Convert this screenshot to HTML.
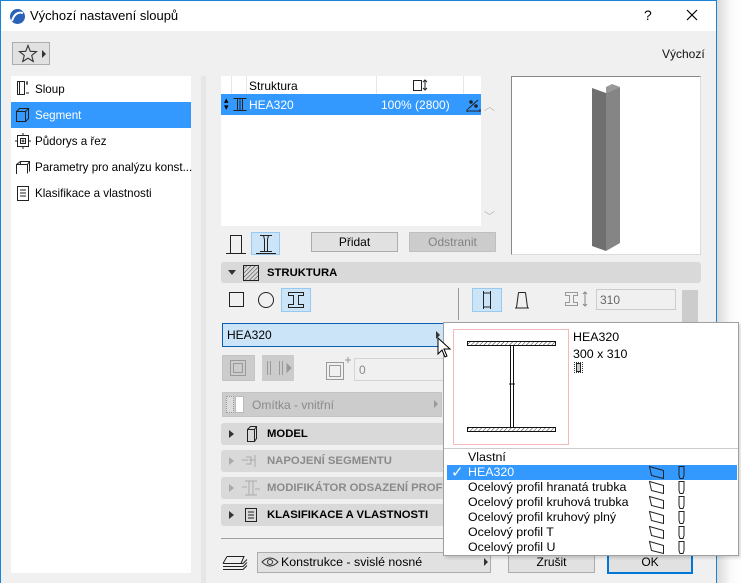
<!DOCTYPE html>
<html><head><meta charset="utf-8"><style>
*{box-sizing:border-box;margin:0;padding:0}
body{width:741px;height:583px;background:#fff;font-family:"Liberation Sans",sans-serif;font-size:12px;color:#000;position:relative;overflow:hidden}
.a{position:absolute}
.btn{position:absolute;background:#e1e1e1;border:1px solid #adadad;text-align:center;line-height:18px}
.sec{position:absolute;left:221px;width:480px;height:22px;background:#d9d9d9;border-radius:3px;font-weight:bold;line-height:22px;font-size:11.3px}
.tri{position:absolute;left:8px;top:7px;width:0;height:0;border-left:5px solid #333;border-top:4px solid transparent;border-bottom:4px solid transparent}
.dis{color:#8a8a8a}
.dis .tri{border-left-color:#aaa}
.it{position:absolute;left:468px;height:15px;line-height:15px;font-size:12.4px}
.nav{position:absolute;left:35px;font-size:11.6px}
</style></head><body>
<div class="a" style="left:716px;top:0;width:25px;height:583px;background:linear-gradient(90deg,#d8d8d8,#fafafa 60%,#fff)"></div>
<div class="a" style="left:0;top:0;width:717px;height:583px;background:#f0f0f0;border-left:1px solid #1883d7;border-right:1px solid #1883d7;border-top:1px solid #1883d7"></div>
<div class="a" style="left:1px;top:1px;width:715px;height:30px;background:#fff"></div>
<svg class="a" style="left:9px;top:8px" width="17" height="17"><circle cx="8.5" cy="8.5" r="7.5" fill="#2a62b8"/><path d="M3 13 Q6 3 14 5" stroke="#fff" stroke-width="2" fill="none"/></svg>
<div class="a" style="left:30px;top:8px;font-size:13px">Výchozí nastavení sloupů</div>
<div class="a" style="left:644px;top:7px;font-size:14px">?</div>
<svg class="a" style="left:686px;top:9px" width="12" height="12"><path d="M1 1L11 11M11 1L1 11" stroke="#000" stroke-width="1.2"/></svg>
<div class="a" style="left:12px;top:42px;width:38px;height:23px;background:#e1e1e1;border:1px solid #adadad"></div>
<svg class="a" style="left:18px;top:44px" width="20" height="19"><path d="M10 1.5L12.3 7.3 18.5 7.6 13.7 11.5 15.3 17.5 10 14.1 4.7 17.5 6.3 11.5 1.5 7.6 7.7 7.3Z" fill="none" stroke="#333" stroke-width="1.1"/></svg>
<div class="a" style="left:42px;top:50px;border-left:4px solid #333;border-top:4px solid transparent;border-bottom:4px solid transparent"></div>
<div class="a" style="left:662px;top:47px;color:#111">Výchozí</div>
<div class="a" style="left:11px;top:76px;width:180px;height:497px;background:#fff"></div>
<div class="a" style="left:201px;top:76px;width:5px;height:507px;background:#e6e6e6"></div>
<div class="a" style="left:11px;top:102px;width:180px;height:26px;background:#3399ff"></div>
<svg class="a" style="left:14px;top:79px" width="18" height="18" fill="none" stroke="#222"><rect x="3.5" y="2.5" width="7" height="13"/><path d="M5.5 2.5v13M12 4l2 0M13 2v4M12 14h3"/></svg>
<div class="nav" style="top:83px">Sloup</div>
<svg class="a" style="left:14px;top:106px" width="18" height="18" fill="none" stroke="#222"><path d="M2.5 5.5h9v10h-9zM2.5 5.5l3-3h9l-3 3M14.5 2.5v10l-3 3"/></svg>
<div class="nav" style="top:109px;color:#fff">Segment</div>
<svg class="a" style="left:14px;top:132px" width="18" height="18" fill="none" stroke="#222"><rect x="3.5" y="3.5" width="11" height="11"/><rect x="6.5" y="6.5" width="5" height="5"/><path d="M9 1v3M9 14v3M1 9h3M14 9h3M9 7.5v3M7.5 9h3"/></svg>
<div class="nav" style="top:135px">Půdorys a řez</div>
<svg class="a" style="left:14px;top:158px" width="18" height="18" fill="none" stroke="#222"><path d="M2.5 16V6.5l4-3h9v10M2.5 6.5h11v9M6.5 3.5v3M13.5 6.5l2-3"/></svg>
<div class="nav" style="top:161px">Parametry pro analýzu konst...</div>
<svg class="a" style="left:14px;top:184px" width="18" height="18" fill="none" stroke="#222"><rect x="3.5" y="2.5" width="11" height="14"/><path d="M6 6h6M6 9h6M6 12h6"/></svg>
<div class="nav" style="top:187px">Klasifikace a vlastnosti</div>
<div class="a" style="left:221px;top:76px;width:260px;height:150px;background:#fff"></div>
<div class="a" style="left:231px;top:76px;width:1px;height:18px;background:#e6e6e6"></div>
<div class="a" style="left:246px;top:76px;width:1px;height:18px;background:#e6e6e6"></div>
<div class="a" style="left:376px;top:76px;width:1px;height:18px;background:#e6e6e6"></div>
<div class="a" style="left:463px;top:76px;width:1px;height:18px;background:#e6e6e6"></div>
<div class="a" style="left:249px;top:79px">Struktura</div>
<svg class="a" style="left:412px;top:78px" width="16" height="14" fill="none" stroke="#222"><rect x="1.5" y="2.5" width="8" height="10"/><path d="M13 2v10M11 4l2-2 2 2M11 10l2 2 2-2"/></svg>
<div class="a" style="left:221px;top:94px;width:260px;height:21px;background:#3399ff"></div>
<div class="a" style="left:224px;top:97px;font-size:9px;line-height:7px">▴<br>▾</div>
<svg class="a" style="left:232px;top:97px" width="16" height="15" fill="none" stroke="#222"><path d="M1.5 1.5h13M1.5 13.5h13M5.5 1.5v12M10.5 1.5v12M8 1.5v12"/></svg>
<div class="a" style="left:249px;top:98px;color:#fff">HEA320</div>
<div class="a" style="left:381px;top:98px;color:#fff">100% (2800)</div>
<svg class="a" style="left:466px;top:97px" width="15" height="15" fill="none" stroke="#222"><path d="M2 12l10-9M1 14h13M1 12v3M14 12v3"/><circle cx="5" cy="5" r="1.3" fill="#222"/><circle cx="10" cy="9" r="1.3" fill="#222"/></svg>
<div class="a" style="left:484px;top:98px;color:#bbb;font-size:11px">︿</div>
<div class="a" style="left:484px;top:208px;color:#bbb;font-size:11px">﹀</div>
<div class="a" style="left:511px;top:76px;width:190px;height:179px;background:#fff;border:1px solid #dcdcdc;border-top:1px solid #888;border-left:1px solid #888"></div>
<svg class="a" style="left:590px;top:80px" width="34" height="172"><path d="M2 8l14 5v158l-14-5z" fill="#6f6f6f"/><path d="M16 13l14-6v156l-14 8z" fill="#858585"/><path d="M16 13l0-6 6-3 8 3z" fill="#999"/></svg>
<svg class="a" style="left:225px;top:232px" width="22" height="22" fill="none" stroke="#222"><path d="M1 21.5h20M5.5 21V3.5h11V21"/></svg>
<div class="a" style="left:251px;top:232px;width:29px;height:23px;background:#cce4f7;border:1px solid #99c9ef"></div>
<svg class="a" style="left:255px;top:233px" width="22" height="22" fill="none" stroke="#222"><path d="M1 20.5h20M5 2.5h12M5 18.5h12M8.5 2.5l1 4v12M13.5 2.5l-1 4v12"/></svg>
<div class="btn" style="left:311px;top:232px;width:87px;height:20px">Přidat</div>
<div class="btn" style="left:409px;top:232px;width:87px;height:20px;background:#ccc;border-color:#bfbfbf;color:#838383">Odstranit</div>
<div class="sec" style="top:262px;height:21px"><div class="a" style="left:7px;top:8px;border-top:5px solid #333;border-left:4px solid transparent;border-right:4px solid transparent"></div>
<svg class="a" style="left:22px;top:3px" width="16" height="16"><defs><pattern id="h" width="3" height="3" patternUnits="userSpaceOnUse" patternTransform="rotate(45)"><line x1="0" y1="0" x2="0" y2="3" stroke="#333"/></pattern></defs><rect x=".5" y=".5" width="15" height="15" fill="url(#h)" stroke="#222"/></svg>
<span class="a" style="left:46px;top:0">STRUKTURA</span></div>
<div class="a" style="left:229px;top:292px;width:15px;height:15px;border:1px solid #222"></div>
<div class="a" style="left:258px;top:292px;width:16px;height:16px;border:1px solid #222;border-radius:50%"></div>
<div class="a" style="left:281px;top:288px;width:30px;height:24px;background:#cce4f7;border:1px solid #99c9ef"></div>
<svg class="a" style="left:287px;top:291px" width="18" height="18" fill="none" stroke="#222"><path d="M1.5 1.5h15v3h-5v9h5v3h-15v-3h5v-9h-5z"/></svg>
<div class="a" style="left:458px;top:288px;width:1px;height:32px;background:#999"></div>
<div class="a" style="left:472px;top:288px;width:30px;height:24px;background:#cce4f7;border:1px solid #99c9ef"></div>
<svg class="a" style="left:480px;top:290px" width="14" height="20" fill="none" stroke="#222"><path d="M3.5 1v18M10.5 1v18M3.5 3h7M3.5 17h7"/></svg>
<svg class="a" style="left:514px;top:290px" width="16" height="20" fill="none" stroke="#222"><path d="M1 18h14M2.5 17.5l2-15M13.5 17.5l-2-15M4.5 2.5h7"/></svg>
<svg class="a" style="left:564px;top:291px" width="28" height="16" fill="none" stroke="#999"><path d="M1.5 1.5h12v3h-4v7h4v3h-12v-3h4v-7h-4z"/><path d="M21 1v14M19 3l2-2 2 2M19 13l2 2 2-2" stroke="#888"/></svg>
<div class="a" style="left:596px;top:289px;width:80px;height:21px;background:#f0f0f0;border:1px solid #ccc;color:#666;padding:3px 3px">310</div>
<div class="a" style="left:682px;top:290px;width:16px;height:35px;background:#ccc"></div>
<div class="a" style="left:222px;top:323px;width:223px;height:24px;background:#cce4f7;border:1px solid #0a5fb4;padding:4px 4px">HEA320</div>
<div class="a" style="left:436px;top:331px;border-left:4px solid #333;border-top:4px solid transparent;border-bottom:4px solid transparent"></div>
<div class="a" style="left:222px;top:355px;width:33px;height:26px;background:#ccc;border:1px solid #c4c4c4"></div>
<svg class="a" style="left:229px;top:359px" width="18" height="18" fill="none" stroke="#999"><rect x="1.5" y="1.5" width="15" height="15"/><rect x="4.5" y="4.5" width="9" height="9"/></svg>
<div class="a" style="left:262px;top:355px;width:32px;height:26px;background:#ccc"></div>
<svg class="a" style="left:264px;top:359px" width="28" height="18" fill="none" stroke="#999"><path d="M3.5 2v14M6.5 2v14M15.5 2v14M18.5 2v14"/><path d="M23 5l4 4-4 4z" fill="#999"/></svg>
<svg class="a" style="left:324px;top:356px" width="28" height="26" fill="none" stroke="#999"><rect x="2.5" y="6.5" width="17" height="17"/><rect x="5.5" y="9.5" width="11" height="11"/><path d="M24 1v6M21 4h6"/></svg>
<div class="a" style="left:354px;top:358px;width:90px;height:23px;background:#f0f0f0;border:1px solid #d4d4d4;color:#8a8a8a;padding:4px 4px">0</div>
<div class="a" style="left:222px;top:392px;width:220px;height:25px;background:#ccc;border:1px solid #c4c4c4"></div>
<div class="a" style="left:226px;top:396px;width:8px;height:17px;background:#ddd;border:1px dotted #999"></div>
<div class="a" style="left:235px;top:396px;width:9px;height:17px;background:#fff;border:1px solid #bbb"></div>
<div class="a" style="left:252px;top:398px;color:#8a8a8a">Omítka - vnitřní</div>
<div class="a" style="left:434px;top:400px;border-left:4px solid #999;border-top:4px solid transparent;border-bottom:4px solid transparent"></div>
<div class="sec" style="top:423px"><div class="tri"></div>
<svg class="a" style="left:24px;top:2px" width="14" height="18" fill="none" stroke="#222"><path d="M2.5 4.5h7v12h-7zM2.5 4.5l3-3h6v12l-2 3M9.5 4.5l2-3"/></svg>
<span class="a" style="left:46px;top:0">MODEL</span></div>
<div class="sec dis" style="top:450px"><div class="tri"></div>
<svg class="a" style="left:20px;top:4px" width="22" height="14" fill="none" stroke="#aaa"><path d="M1 6h6M5 3h5v7H5M8 6h6M14 1v12"/></svg>
<span class="a" style="left:46px;top:0">NAPOJENÍ SEGMENTU</span></div>
<div class="sec dis" style="top:477px"><div class="tri"></div>
<svg class="a" style="left:20px;top:2px" width="22" height="18" fill="none" stroke="#aaa"><path d="M4 2h12M4 16h12M8 2v14M12 2v14M1 8h5M14 10h5"/></svg>
<span class="a" style="left:46px;top:0">MODIFIKÁTOR ODSAZENÍ PROFILU</span></div>
<div class="sec" style="top:504px"><div class="tri"></div>
<svg class="a" style="left:23px;top:3px" width="14" height="16" fill="none" stroke="#222"><rect x="1.5" y="1.5" width="11" height="13"/><path d="M4 5h6M4 8h6M4 11h6"/></svg>
<span class="a" style="left:46px;top:0">KLASIFIKACE A VLASTNOSTI</span></div>
<div class="a" style="left:221px;top:538px;width:480px;height:1px;background:#a0a0a0"></div>
<svg class="a" style="left:222px;top:553px" width="26" height="18" fill="none" stroke="#222"><path d="M1 16.5h20l4-4M1 13.5h20l4-4M1 10.5h20l4-4M5 3.5h17l-3 7M5 3.5l-4 7"/></svg>
<div class="a" style="left:257px;top:552px;width:234px;height:21px;background:#e1e1e1;border:1px solid #adadad"></div>
<svg class="a" style="left:261px;top:556px" width="18" height="12" fill="none" stroke="#333"><path d="M1 6Q9 -2 17 6Q9 14 1 6Z"/><circle cx="9" cy="6" r="2.5"/></svg>
<div class="a" style="left:281px;top:555px;font-size:12.4px">Konstrukce - svislé nosné</div>
<div class="a" style="left:484px;top:558px;border-left:4px solid #333;border-top:4px solid transparent;border-bottom:4px solid transparent"></div>
<div class="btn" style="left:508px;top:552px;width:87px;height:21px">Zrušit</div>
<div class="btn" style="left:607px;top:552px;width:86px;height:22px;border:2px solid #0078d7;line-height:17px">OK</div>
<div class="a" style="left:443px;top:322px;width:296px;height:234px;background:#fff;border:1px solid #a0a0a0;box-shadow:2px 2px 3px rgba(0,0,0,.15)"></div>
<div class="a" style="left:453px;top:329px;width:116px;height:116px;border:1px solid #f4b8b8"></div>
<svg class="a" style="left:453px;top:329px" width="116" height="116"><defs><pattern id="h2" width="3" height="3" patternUnits="userSpaceOnUse" patternTransform="rotate(45)"><line x1="0" y1="0" x2="0" y2="3" stroke="#333"/></pattern></defs>
<rect x="14.5" y="12.5" width="88" height="4" fill="url(#h2)" stroke="#111"/>
<rect x="14.5" y="98.5" width="88" height="4" fill="url(#h2)" stroke="#111"/>
<path d="M57.5 16.5v82M60.5 16.5v82M56 55h6" stroke="#111" fill="none"/></svg>
<div class="a" style="left:573px;top:330px;font-size:12.4px">HEA320</div>
<div class="a" style="left:573px;top:347px;font-size:12.4px">300 x 310</div>
<div class="a" style="left:574px;top:362px;width:9px;height:11px;border:1px dotted #333"></div>
<div class="a" style="left:576px;top:363px;width:5px;height:9px;border:1px solid #222;background:#ccc"></div>
<div class="a" style="left:444px;top:448px;width:294px;height:1px;background:#ccc"></div>
<div class="it" style="top:450px">Vlastní</div>
<div class="a" style="left:447px;top:465px;width:290px;height:15px;background:#3399ff"></div>
<div class="a" style="left:451px;top:463px;color:#fff;font-size:15px">✓</div>
<div class="it" style="top:465px;color:#fff">HEA320</div>
<div class="it" style="top:480px">Ocelový profil hranatá trubka</div>
<div class="it" style="top:495px">Ocelový profil kruhová trubka</div>
<div class="it" style="top:510px">Ocelový profil kruhový plný</div>
<div class="it" style="top:525px">Ocelový profil T</div>
<div class="it" style="top:540px">Ocelový profil U</div>
<svg class="a" style="left:648px;top:464px" width="40" height="92" fill="none" stroke="#222">
<g id="r"><path d="M1.5 2.5l14 4v8l-12-3zM1.5 2.5l2 9"/><path d="M31 2.5h5v9l-1 3h-3l-1-3z"/></g>
<use href="#r" y="15"/><use href="#r" y="30"/><use href="#r" y="45"/><use href="#r" y="60"/><use href="#r" y="75"/></svg>
<svg class="a" style="left:437px;top:337px" width="14" height="22"><path d="M1 1v16l4-4 3 7 2-1-3-7h6z" fill="#fff" stroke="#000"/></svg>
</body></html>
